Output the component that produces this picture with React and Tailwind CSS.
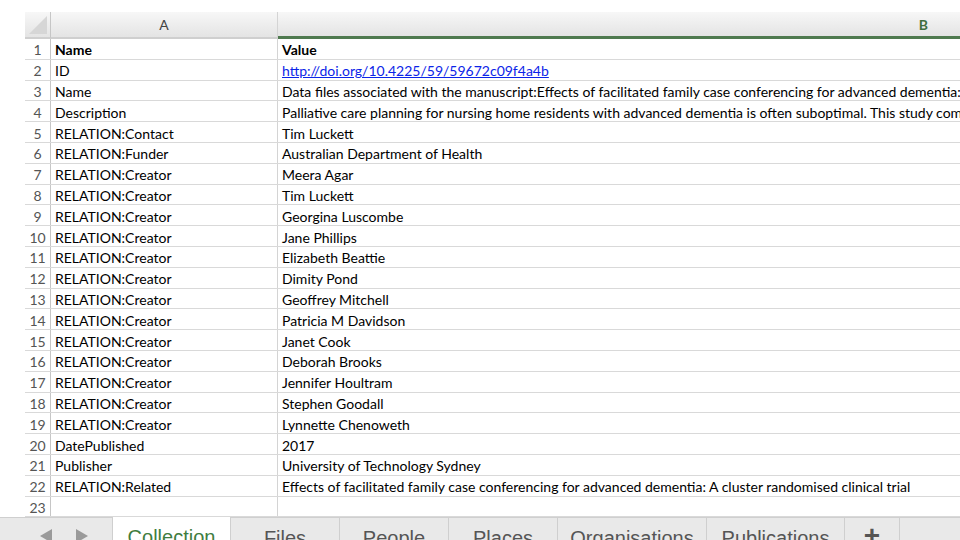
import React from "react";

const rows = [
  ["Name", "Value", true],
  ["ID", "http://doi.org/10.4225/59/59672c09f4a4b", false, true],
  ["Name", "Data files associated with the manuscript:Effects of facilitated family case conferencing for advanced dementia: A cluster randomised clinical trial"],
  ["Description", "Palliative care planning for nursing home residents with advanced dementia is often suboptimal. This study compared effects of facilitated case conferencing"],
  ["RELATION:Contact", "Tim Luckett"],
  ["RELATION:Funder", "Australian Department of Health"],
  ["RELATION:Creator", "Meera Agar"],
  ["RELATION:Creator", "Tim Luckett"],
  ["RELATION:Creator", "Georgina Luscombe"],
  ["RELATION:Creator", "Jane Phillips"],
  ["RELATION:Creator", "Elizabeth Beattie"],
  ["RELATION:Creator", "Dimity Pond"],
  ["RELATION:Creator", "Geoffrey Mitchell"],
  ["RELATION:Creator", "Patricia M Davidson"],
  ["RELATION:Creator", "Janet Cook"],
  ["RELATION:Creator", "Deborah Brooks"],
  ["RELATION:Creator", "Jennifer Houltram"],
  ["RELATION:Creator", "Stephen Goodall"],
  ["RELATION:Creator", "Lynnette Chenoweth"],
  ["DatePublished", "2017"],
  ["Publisher", "University of Technology Sydney"],
  ["RELATION:Related", "Effects of facilitated family case conferencing for advanced dementia: A cluster randomised clinical trial"],
  ["", ""],
];

const tabs = [
  ["Collection", "w-[119px]"],
  ["Files", "w-[109px]"],
  ["People", "w-[109px]"],
  ["Places", "w-[109px]"],
  ["Organisations", "w-[149px]"],
  ["Publications", "w-[138px]"],
];

export default function App() {
  return (
    <div className="w-[960px] h-[540px] bg-white overflow-hidden flex flex-col text-[14px] text-black" style={{ fontFamily: "Lato, 'Liberation Sans', sans-serif" }}>
      <div className="h-[12px] shrink-0" />
      {/* column header */}
      <div className="flex h-[27px] shrink-0 pl-[25px]">
        <div className="w-[26px] relative bg-gradient-to-b from-[#f7f7f7] to-[#e4e4e4] border-r border-[#c6c6c6] border-b-2 border-b-[#cfcfcf]">
          <svg className="absolute right-[3px] bottom-[3px]" width="18" height="18" viewBox="0 0 18 18">
            <polygon points="18,0 18,18 0,18" fill="#d6d6d6" />
          </svg>
        </div>
        <div className="w-[227px] flex items-center justify-center bg-gradient-to-b from-[#f7f7f7] to-[#e4e4e4] border-r border-[#d4d4d4] border-b-2 border-b-[#cfcfcf] text-[#444] text-[14px]">
          A
        </div>
        <div className="flex-1 flex items-center justify-end pr-[32px] bg-gradient-to-b from-[#f7f7f7] to-[#e4e4e4] border-b-[3px] border-b-[#4f7a4f] text-[#3f6f3f] font-bold text-[14px]">
          B
        </div>
      </div>
      {/* rows */}
      <div className="flex flex-col pl-[25px] shrink-0">
        {rows.map((r, i) => (
          <div key={i} className="flex h-[20.8px] border-b border-[#d9d9d9] items-center">
            <div className="w-[26px] h-full flex items-center justify-center pt-[2px] text-[#555] border-r border-[#c6c6c6]">{i + 1}</div>
            <div className={`w-[227px] h-full flex items-center pt-[2px] pl-[4px] border-r border-[#d4d4d4] whitespace-nowrap overflow-hidden ${r[2] ? "font-bold" : ""}`}>{r[0]}</div>
            <div className={`flex-1 h-full flex items-center pt-[2px] pl-[4px] whitespace-nowrap overflow-hidden ${r[2] ? "font-bold" : ""} ${r[3] ? "text-[#0b24e8] underline" : ""}`}>{r[1]}</div>
          </div>
        ))}
      </div>
      {/* tab bar */}
      <div className="flex-1 flex bg-[#e9e9e9] border-t border-[#cfcfcf] text-[20px] text-[#555]" style={{ fontFamily: "'Liberation Sans', Arial, sans-serif" }}>
        <div className="w-[112px] flex items-start pt-[11px] pl-[40px] gap-[24px]">
          <svg width="12" height="14" viewBox="0 0 12 14"><polygon points="12,0 12,14 0,7" fill="#9a9a9a" /></svg>
          <svg width="12" height="14" viewBox="0 0 12 14"><polygon points="0,0 0,14 12,7" fill="#9a9a9a" /></svg>
        </div>
        {tabs.map(([t, w], i) => (
          <div key={t} className={`${w} flex justify-center pt-[10px] leading-none border-r border-[#cfcfcf] ${i === 0 ? "bg-white text-[#3f7d3f] -mt-px border-l" : ""}`}>
            {t}
          </div>
        ))}
        <div className="w-[55px] flex justify-center pt-[4px] leading-none border-r border-[#cfcfcf] text-[28px] font-bold text-[#555]">+</div>
      </div>
    </div>
  );
}
